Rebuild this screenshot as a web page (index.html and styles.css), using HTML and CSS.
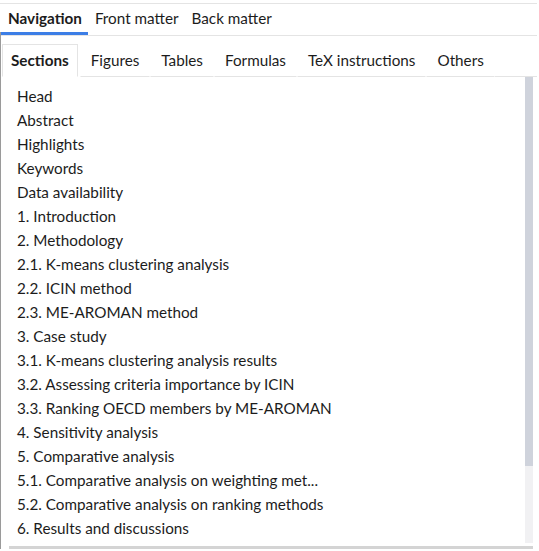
FILE: index.html
```html
<!DOCTYPE html>
<html lang="en">
<head>
<meta charset="utf-8">
<title>Navigation</title>
<link rel="stylesheet" href="styles.css">
</head>
<body>
<div class="app">
  <nav class="top-tabs">
    <span class="top-tab active">Navigation</span>
    <span class="top-tab">Front matter</span>
    <span class="top-tab">Back matter</span>
  </nav>
  <div class="panel">
    <div class="sub-tabs">
      <span class="sub-tab active">Sections</span>
      <span class="sub-tab">Figures</span>
      <span class="sub-tab">Tables</span>
      <span class="sub-tab">Formulas</span>
      <span class="sub-tab">TeX instructions</span>
      <span class="sub-tab">Others</span>
      <span class="sub-fill"></span>
    </div>
    <div class="list-wrap">
      <ul class="list">
        <li>Head</li>
        <li>Abstract</li>
        <li>Highlights</li>
        <li>Keywords</li>
        <li>Data availability</li>
        <li>1. Introduction</li>
        <li>2. Methodology</li>
        <li>2.1. K-means clustering analysis</li>
        <li>2.2. ICIN method</li>
        <li>2.3. ME-AROMAN method</li>
        <li>3. Case study</li>
        <li>3.1. K-means clustering analysis results</li>
        <li>3.2. Assessing criteria importance by ICIN</li>
        <li>3.3. Ranking OECD members by ME-AROMAN</li>
        <li>4. Sensitivity analysis</li>
        <li>5. Comparative analysis</li>
        <li>5.1. Comparative analysis on weighting met...</li>
        <li>5.2. Comparative analysis on ranking methods</li>
        <li>6. Results and discussions</li>
      </ul>
      <div class="vscroll"><div class="thumb"></div></div>
    </div>
    <div class="hbar"></div>
  </div>
</div>
</body>
</html>
```

FILE: styles.css
```css
html, body {
  margin: 0;
  padding: 0;
  background: #ffffff;
}

body {
  font-family: "Lato", "Liberation Sans", sans-serif;
  font-size: 15.25px;
  color: #1c1c1c;
}

.app {
  width: 537px;
  padding-top: 3px;
}

.top-tabs {
  display: flex;
  border-top: 1px solid #e4e4e4;
  border-bottom: 1px solid #e4e4e4;
  padding-left: 1px;
}

.top-tab {
  display: flex;
  align-items: center;
  height: 27px;
  padding: 1px 6px 0 7px;
  border-bottom: 3px solid transparent;
  line-height: 1;
  white-space: nowrap;
}

.top-tab.active {
  font-weight: 700;
  border-bottom-color: #3c7ee6;
}

.panel {
  border-left: 1px solid #9a9a9a;
  margin-top: -4px;
  padding-top: 4px;
}

.sub-tabs {
  display: flex;
  padding-top: 8px;
  padding-left: 1px;
}

.sub-tab {
  display: flex;
  align-items: center;
  height: 30px;
  padding: 0 10px 1px;
  border: 1px solid transparent;
  border-bottom: 1px solid #e4e4e4;
  white-space: nowrap;
}

.sub-tab.active {
  font-weight: 700;
  padding: 0 8px 1px;
  border-color: #e4e4e4;
  border-bottom-color: transparent;
  margin-right: 2px;
}

.sub-fill {
  flex: 1;
  border-bottom: 1px solid #e4e4e4;
}

.list-wrap {
  display: flex;
  width: 532px;
  height: 466px;
}

.list {
  flex: 1;
  list-style: none;
  margin: 0;
  padding: 7px 0 0 16px;
  overflow: hidden;
}

.list li {
  line-height: 24px;
  height: 24px;
  white-space: nowrap;
}

.vscroll {
  width: 8px;
  background: #f1f1f3;
}

.thumb {
  height: 389px;
  background: #cfd3dc;
}

.hbar {
  margin: 3px 0 0 8px;
  width: 524px;
  height: 3px;
  background: #d4d4d4;
}
```
